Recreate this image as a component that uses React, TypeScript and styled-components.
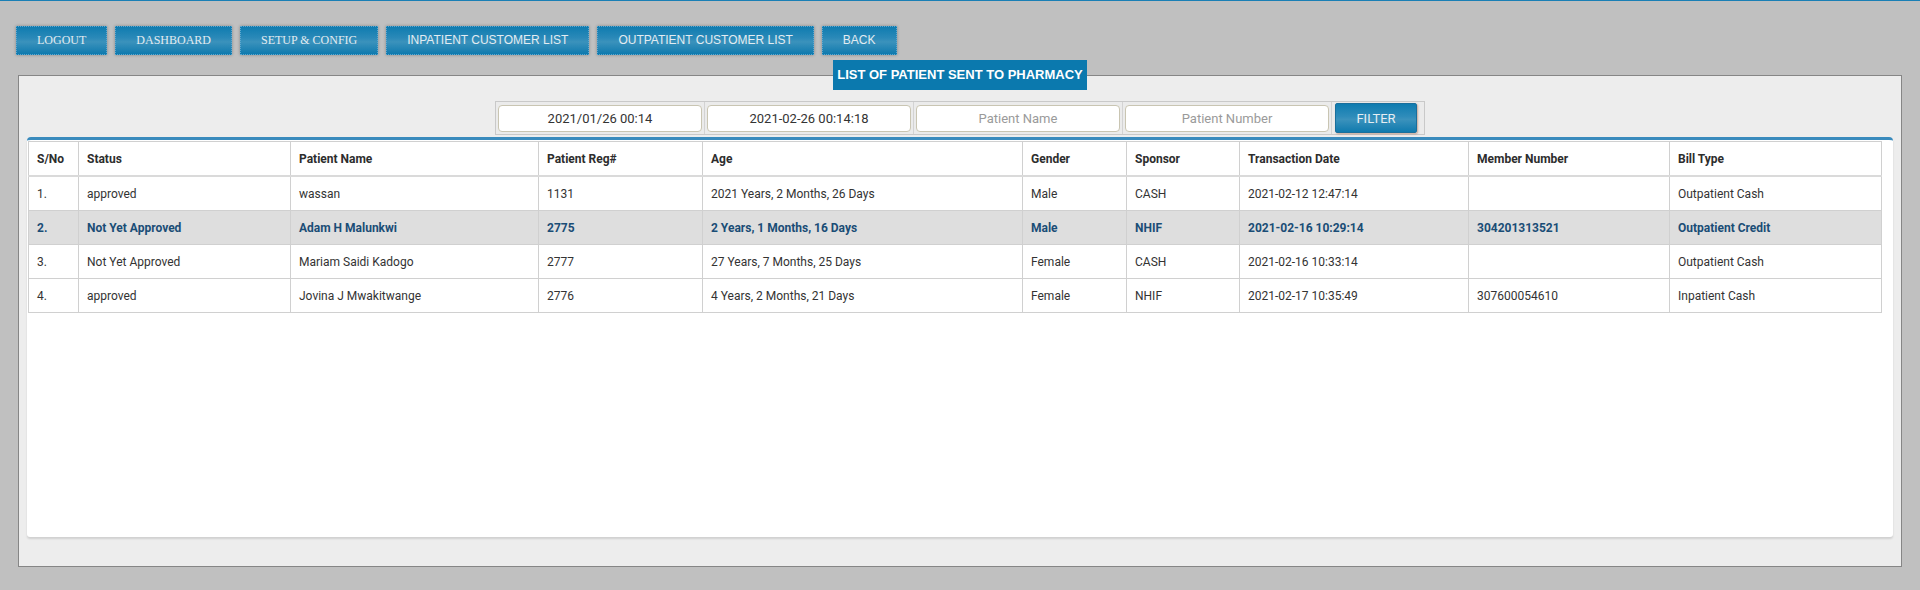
import { FC } from 'react'
import styled, { createGlobalStyle } from 'styled-components'

const GlobalStyle = createGlobalStyle`
  html, body {
    margin: 0;
    padding: 0;
    background: #c0c0c0;
  }
  body {
    font-family: Roboto, 'Liberation Sans', sans-serif;
    color: #333;
  }
`

const Page = styled.div`
  border-top: 1px solid #1a7fb5;
  min-height: 589px;
`
const Nav = styled.nav`
  display: flex;
  gap: 8px;
  padding: 25px 16px 0;
  margin-bottom: 5px;
`
const NavButton = styled.button<{ $serif?: boolean }>`
  height: 29px;
  padding: 0 20px;
  border: 1px dotted #5fa7cf;
  background: linear-gradient(#0f7cb0 0%, #2a89b8 40%, #3b92bc 55%, #0f7aae 100%);
  box-shadow: 0 0 3px rgba(0, 0, 0, 0.3);
  color: #e2ecf2;
  font-family: ${(p) =>
    p.$serif ? "'Liberation Serif', 'Times New Roman', serif" : "'Liberation Sans', Arial, sans-serif"};
  font-size: 12px;
  line-height: 27px;
  white-space: nowrap;
  cursor: pointer;
`
const Panel = styled.fieldset`
  margin: 0 18px;
  padding: 0 8px 29px;
  border: 1px solid #868686;
  background: #ededed;
  min-width: 0;
`
const Title = styled.legend`
  margin: 0 auto;
  padding: 0 4px;
  height: 30px;
  line-height: 30px;
  background: #0b79ae;
  color: #fff;
  font-family: 'Liberation Sans', Arial, sans-serif;
  font-weight: bold;
  font-size: 13px;
`
const FilterBar = styled.div`
  display: flex;
  width: fit-content;
  margin: 11px auto 2px;
  border: 1px solid #c9c9c9;
  background: #ebebeb;
`
const FilterCell = styled.div<{ $last?: boolean }>`
  display: flex;
  align-items: center;
  height: 32px;
  padding: ${(p) => (p.$last ? '0 7px 0 3px' : '0 2px')};
  border-right: ${(p) => (p.$last ? 'none' : '1px solid #d3d3d3')};
`
const FilterInput = styled.input`
  box-sizing: border-box;
  width: 204px;
  height: 27px;
  border: 1px solid #c9c5b2;
  border-radius: 4px;
  background: #fff;
  text-align: center;
  font-family: Roboto, 'Liberation Sans', sans-serif;
  font-size: 13px;
  color: #333;
  outline: none;
  &::placeholder {
    color: #9a9a9a;
  }
`
const FilterButton = styled.button`
  width: 82px;
  height: 30px;
  border: 1px solid #1a6f9c;
  border-radius: 2px;
  background: linear-gradient(#0f7cb0 0%, #2f8cba 45%, #3b92bc 55%, #0f7aae 100%);
  box-shadow: 1px 1px 2px rgba(170, 110, 80, 0.55);
  color: #e6eef3;
  font-family: Roboto, 'Liberation Sans', sans-serif;
  font-size: 13px;
  cursor: pointer;
`
const TableBox = styled.div`
  height: 396px;
  padding: 1px 11px 0 1px;
  background: #fff;
  border-top: 3px solid #3a8bbd;
  border-radius: 4px 4px 3px 3px;
  box-shadow: 0 2px 2px rgba(0, 0, 0, 0.12);
`
const Table = styled.table`
  width: 100%;
  table-layout: fixed;
  border-collapse: collapse;
  font-size: 12px;
  color: #333;
`
const HeadCell = styled.th`
  padding: 9px 8px 7px;
  line-height: 17px;
  text-align: left;
  font-weight: bold;
  color: #2d2d2d;
  border: 1px solid #d0d0d0;
  border-bottom: 2px solid #dadada;
`
const Row = styled.tr<{ $active?: boolean }>`
  background: ${(p) => (p.$active ? '#dedede' : '#fff')};
  color: ${(p) => (p.$active ? '#1a4d76' : '#333')};
  font-weight: ${(p) => (p.$active ? 'bold' : 'normal')};
`
const Cell = styled.td`
  padding: 9px 8px 7px;
  line-height: 17px;
  border: 1px solid #d0d0d0;
  white-space: nowrap;
`

const columns = [
  { label: 'S/No', width: 50 },
  { label: 'Status', width: 212 },
  { label: 'Patient Name', width: 248 },
  { label: 'Patient Reg#', width: 164 },
  { label: 'Age', width: 320 },
  { label: 'Gender', width: 104 },
  { label: 'Sponsor', width: 113 },
  { label: 'Transaction Date', width: 229 },
  { label: 'Member Number', width: 201 },
  { label: 'Bill Type', width: 212 },
]

const patients = [
  ['1.', 'approved', 'wassan', '1131', '2021 Years, 2 Months, 26 Days', 'Male', 'CASH', '2021-02-12 12:47:14', '', 'Outpatient Cash'],
  ['2.', 'Not Yet Approved', 'Adam H Malunkwi', '2775', '2 Years, 1 Months, 16 Days', 'Male', 'NHIF', '2021-02-16 10:29:14', '304201313521', 'Outpatient Credit'],
  ['3.', 'Not Yet Approved', 'Mariam Saidi Kadogo', '2777', '27 Years, 7 Months, 25 Days', 'Female', 'CASH', '2021-02-16 10:33:14', '', 'Outpatient Cash'],
  ['4.', 'approved', 'Jovina J Mwakitwange', '2776', '4 Years, 2 Months, 21 Days', 'Female', 'NHIF', '2021-02-17 10:35:49', '307600054610', 'Inpatient Cash'],
]

const App: FC = () => {
  return (
    <>
      <GlobalStyle />
      <Page>
        <Nav>
          <NavButton $serif>LOGOUT</NavButton>
          <NavButton $serif>DASHBOARD</NavButton>
          <NavButton $serif>SETUP &amp; CONFIG</NavButton>
          <NavButton>INPATIENT CUSTOMER LIST</NavButton>
          <NavButton>OUTPATIENT CUSTOMER LIST</NavButton>
          <NavButton>BACK</NavButton>
        </Nav>
        <Panel>
          <Title>LIST OF PATIENT SENT TO PHARMACY</Title>
          <FilterBar>
            <FilterCell>
              <FilterInput defaultValue='2021/01/26 00:14' />
            </FilterCell>
            <FilterCell>
              <FilterInput defaultValue='2021-02-26 00:14:18' />
            </FilterCell>
            <FilterCell>
              <FilterInput placeholder='Patient Name' />
            </FilterCell>
            <FilterCell>
              <FilterInput placeholder='Patient Number' />
            </FilterCell>
            <FilterCell $last>
              <FilterButton>FILTER</FilterButton>
            </FilterCell>
          </FilterBar>
          <TableBox>
            <Table>
              <colgroup>
                {columns.map((c) => (
                  <col key={c.label} style={{ width: c.width }} />
                ))}
              </colgroup>
              <thead>
                <tr>
                  {columns.map((c) => (
                    <HeadCell key={c.label}>{c.label}</HeadCell>
                  ))}
                </tr>
              </thead>
              <tbody>
                {patients.map((p, i) => (
                  <Row key={p[0]} $active={i === 1}>
                    {p.map((v, j) => (
                      <Cell key={j}>{v}</Cell>
                    ))}
                  </Row>
                ))}
              </tbody>
            </Table>
          </TableBox>
        </Panel>
      </Page>
    </>
  )
}
export default App
